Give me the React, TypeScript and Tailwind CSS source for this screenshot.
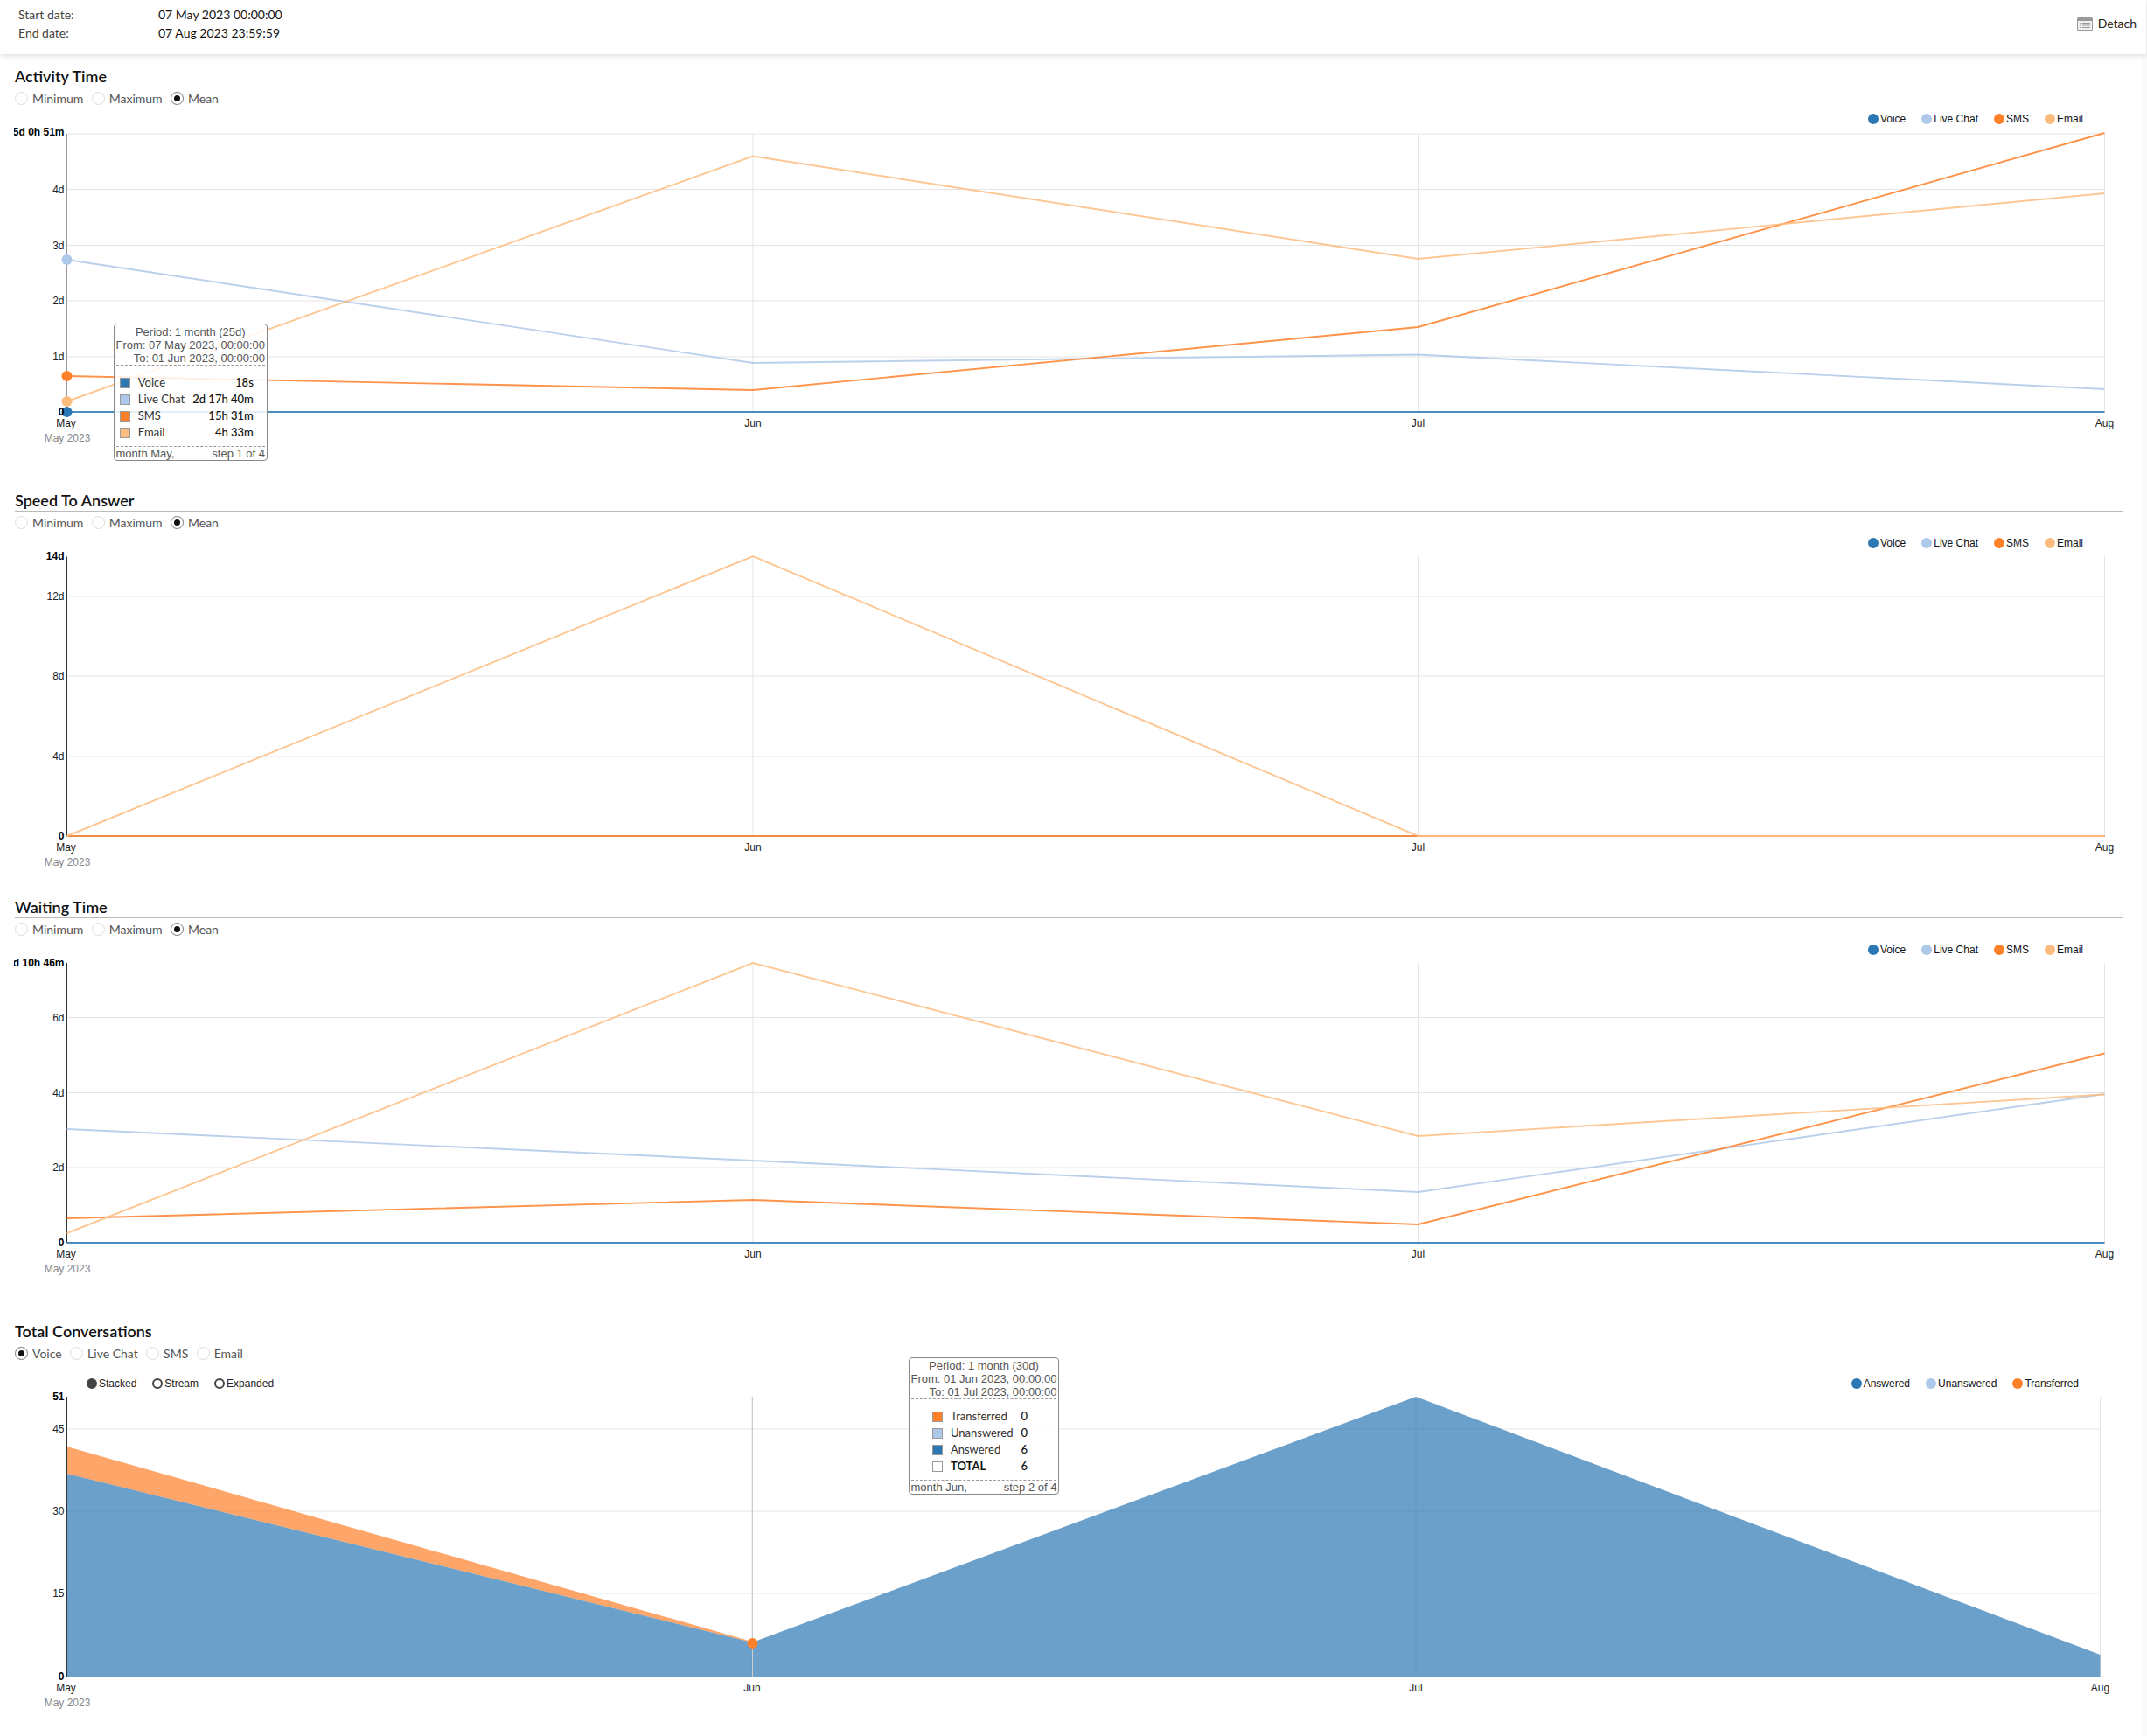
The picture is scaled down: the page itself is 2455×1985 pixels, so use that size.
import type { ReactNode } from "react";

const VOICE = "#2c78b4";
const LIVE = "#aec8e9";
const SMS = "#fe8029";
const EMAIL = "#fdbc7f";

interface Series {
  color: string;
  ys: number[];
}

interface Tick {
  label: string;
  y: number;
  dy?: number;
  bold?: boolean;
  grid?: boolean;
}

const lineLegend = [
  { label: "Voice", color: VOICE },
  { label: "Live Chat", color: LIVE },
  { label: "SMS", color: SMS },
  { label: "Email", color: EMAIL },
];

const xs = [76.5, 861, 1621.5, 2406.5];
const areaXs = [76.5, 860, 1619, 2401.5];

function Radio({ label, checked }: { label: string; checked?: boolean }) {
  return (
    <div className="flex items-center gap-[5px]">
      <span
        className={`flex h-[15px] w-[15px] items-center justify-center rounded-full border bg-white ${
          checked ? "border-[#777]" : "border-[#ddd]"
        }`}
      >
        {checked && <span className="h-[7px] w-[7px] rounded-full bg-[#111]" />}
      </span>
      <span className="-translate-y-[0.5px]">{label}</span>
    </div>
  );
}

function SectionTitle({ title, radios, checked }: { title: string; radios: string[]; checked: string }) {
  return (
    <>
      <div className="mr-[23px] h-[25px] border-b border-[#bbb] text-[18px] leading-[24px] font-semibold text-[#111]">
        {title}
      </div>
      <div className="flex h-[24px] items-center gap-[9.4px] text-[14px] text-[#555]">
        {radios.map((r) => (
          <Radio key={r} label={r} checked={r === checked} />
        ))}
      </div>
    </>
  );
}

function Legend({ items }: { items: { label: string; color: string }[] }) {
  return (
    <div className="flex items-center gap-[18px] font-['Liberation_Sans',sans-serif] text-[12px] text-[#111]">
      {items.map((item) => (
        <div key={item.label} className="flex items-center gap-[2px]">
          <span className="h-[12px] w-[12px] rounded-full" style={{ backgroundColor: item.color }} />
          {item.label}
        </div>
      ))}
    </div>
  );
}

function LegendRow() {
  return (
    <div className="relative z-10 -mb-[12px] flex h-[24px] items-center justify-end pr-[68px]">
      <Legend items={lineLegend} />
    </div>
  );
}

function Axes({ ticks, bottom, top, x, labelY, children }: { ticks: Tick[]; bottom: number; top: number; x: number[]; labelY: number; children?: ReactNode }) {
  const months = ["May", "Jun", "Jul", "Aug"];
  return (
    <g fontFamily="'Liberation Sans', sans-serif" fontSize="12">
      {ticks.filter((t) => t.grid !== false).map((t) => (
        <line key={t.label} x1={x[0]} x2={x[3]} y1={t.y} y2={t.y} stroke="#e5e5e5" />
      ))}
      {x.slice(1).map((v) => (
        <line key={v} x1={v} x2={v} y1={top} y2={bottom} stroke="#e5e5e5" />
      ))}
      {children}
      {ticks.map((t) => (
        <text key={t.label} x={73.5} y={t.y + 4 + (t.dy ?? 0)} textAnchor="end" fill={t.bold ? "#000" : "#222"} fontWeight={t.bold ? 700 : 400}>
          {t.label}
        </text>
      ))}
      {months.map((m, i) => (
        <text key={m} x={i === 0 ? 75.5 : x[i]} y={labelY} textAnchor="middle" fill="#222">
          {m}
        </text>
      ))}
      <text x={77} y={labelY + 17} textAnchor="middle" fill="#888">
        May 2023
      </text>
    </g>
  );
}

function LineChart({ top, height, ticks, series, plotTop, bottom, hover, children }: { top: number; height: number; ticks: Tick[]; series: Series[]; plotTop: number; bottom: number; hover?: boolean; children?: ReactNode }) {
  return (
    <svg className="-ml-[1px] block" width={2434} height={height} viewBox={`16 ${top} 2434 ${height}`}>
      <Axes ticks={ticks} bottom={bottom} top={plotTop} x={xs} labelY={bottom + 17}>
        <line x1={76.5} x2={76.5} y1={plotTop} y2={bottom} stroke={hover ? "#999" : "#333"} />
        {series.map((s) => (
          <polyline
            key={s.color}
            fill="none"
            stroke={s.color}
            strokeWidth={1.9}
            strokeOpacity={0.85}
            points={s.ys.map((y, i) => `${xs[i]},${y}`).join(" ")}
          />
        ))}
        {children}
      </Axes>
    </svg>
  );
}

function Tooltip({ className, head, rows, month, step }: { className: string; head: string[]; rows: { label: string; value: string; color: string; bold?: boolean }[]; month: string; step: string }) {
  return (
    <div className={`absolute z-20 w-fit rounded-[4px] border border-[#888] bg-white/85 px-[1.5px] font-['Liberation_Sans',sans-serif] text-[13px] leading-[15px] text-[#555] ${className}`}>
      <div className="border-b border-dashed border-[#999] pt-[1px] whitespace-nowrap">
        <div className="text-center">{head[0]}</div>
        <div className="text-right">{head[1]}</div>
        <div className="text-right">{head[2]}</div>
      </div>
      <table className="mx-auto mt-[10px] mb-[6px] border-collapse font-['Lato',sans-serif] text-[13px] text-[#333]">
        <tbody>
          {rows.map((r) => (
            <tr key={r.label} className="h-[19px]">
              <td className="pr-[9px]">
                <span className="block h-[12px] w-[12px] border border-[#999]" style={{ backgroundColor: r.color }} />
              </td>
              <td className={`pr-[9px] ${r.bold ? "font-bold text-[#111]" : ""}`}>{r.label}</td>
              <td className="pr-[9px] text-right font-medium text-[#111]">{r.value}</td>
            </tr>
          ))}
        </tbody>
      </table>
      <div className="flex justify-between border-t border-dashed border-[#999]">
        <span>{month}</span>
        <span>{step}</span>
      </div>
    </div>
  );
}

function DetachIcon() {
  return (
    <svg width="18" height="15" viewBox="0 0 18 15">
      <rect x="0" y="0" width="18" height="15" rx="1.5" fill="#999" />
      <rect x="1" y="4" width="16" height="10" fill="#f0f0f0" />
      <g stroke="#999" strokeWidth="1">
        <line x1="3" x2="4.5" y1="6.5" y2="6.5" />
        <line x1="6" x2="15" y1="6.5" y2="6.5" />
        <line x1="3" x2="4.5" y1="9" y2="9" />
        <line x1="6" x2="15" y1="9" y2="9" />
        <line x1="3" x2="4.5" y1="11.5" y2="11.5" />
        <line x1="6" x2="15" y1="11.5" y2="11.5" />
      </g>
    </svg>
  );
}

const timeRadios = ["Minimum", "Maximum", "Mean"];

export default function App() {
  return (
    <div className="flex h-[1985px] w-[2455px] overflow-hidden bg-white font-['Lato',sans-serif]">
      <div className="flex w-[2450px] flex-col">
        {/* Header */}
        <div className="relative z-10 -mr-[4px] flex h-[62px] justify-between bg-white shadow-[0_2px_6px_rgba(0,0,0,0.13)]">
          <div className="mt-[7px] ml-[11px] h-fit w-[1355px] text-[14px] leading-[20px]">
            <div className="flex h-[21px] border-b border-[#e8e8e8]">
              <span className="w-[170px] pl-[10px] text-[#444]">Start date:</span>
              <span className="text-[#111]">07 May 2023 00:00:00</span>
            </div>
            <div className="flex">
              <span className="w-[170px] pl-[10px] text-[#444]">End date:</span>
              <span className="text-[#111]">07 Aug 2023 23:59:59</span>
            </div>
          </div>
          <div className="mt-[17px] mr-[11px] flex h-fit items-center gap-[6px] text-[14px] leading-[20px] text-[#222]">
            <DetachIcon />
            Detach
          </div>
        </div>

        <div className="flex flex-col pt-[13px] pl-[17px]">
          {/* Activity Time */}
          <section className="relative h-[485px]">
            <SectionTitle title="Activity Time" radios={timeRadios} checked="Mean" />
            <LegendRow />
            <LineChart
              top={136}
              height={424}
              plotTop={153}
              bottom={471}
              hover
              ticks={[
                { label: "5d 0h 51m", y: 153, dy: -2.3, bold: true },
                { label: "4d", y: 216.5 },
                { label: "3d", y: 280.5 },
                { label: "2d", y: 344 },
                { label: "1d", y: 408 },
                { label: "0", y: 471, bold: true, grid: false },
              ]}
              series={[
                { color: VOICE, ys: [471, 471, 471, 471] },
                { color: LIVE, ys: [297, 415, 405.5, 445] },
                { color: SMS, ys: [430, 446, 374, 152] },
                { color: EMAIL, ys: [459, 178.5, 296, 221] },
              ]}
            >
              <circle cx={76.5} cy={297} r={6} fill={LIVE} />
              <circle cx={76.5} cy={459} r={6} fill={EMAIL} />
              <circle cx={76.5} cy={430} r={6} fill={SMS} />
              <circle cx={76.5} cy={471} r={6} fill={VOICE} />
            </LineChart>
            <Tooltip
              className="top-[295px] left-[113px]"
              head={["Period: 1 month (25d)", "From: 07 May 2023, 00:00:00", "To: 01 Jun 2023, 00:00:00"]}
              rows={[
                { label: "Voice", value: "18s", color: VOICE },
                { label: "Live Chat", value: "2d 17h 40m", color: LIVE },
                { label: "SMS", value: "15h 31m", color: SMS },
                { label: "Email", value: "4h 33m", color: EMAIL },
              ]}
              month="month May,"
              step="step 1 of 4"
            />
          </section>

          {/* Speed To Answer */}
          <section className="h-[465px]">
            <SectionTitle title="Speed To Answer" radios={timeRadios} checked="Mean" />
            <LegendRow />
            <LineChart
              top={621}
              height={404}
              plotTop={636.5}
              bottom={956}
              ticks={[
                { label: "14d", y: 636.5, dy: -1, bold: true, grid: false },
                { label: "12d", y: 682 },
                { label: "8d", y: 773 },
                { label: "4d", y: 865 },
                { label: "0", y: 956, bold: true, grid: false },
              ]}
              series={[
                { color: VOICE, ys: [956, 956, 956, 956] },
                { color: LIVE, ys: [956, 956, 956, 956] },
                { color: SMS, ys: [956, 956, 956, 956] },
                { color: EMAIL, ys: [956, 636, 956, 956] },
              ]}
            />
          </section>

          {/* Waiting Time */}
          <section className="h-[485px]">
            <SectionTitle title="Waiting Time" radios={timeRadios} checked="Mean" />
            <LegendRow />
            <LineChart
              top={1086}
              height={424}
              plotTop={1101}
              bottom={1421}
              ticks={[
                { label: "7d 10h 46m", y: 1101, bold: true, grid: false },
                { label: "6d", y: 1163.5 },
                { label: "4d", y: 1249.5 },
                { label: "2d", y: 1335 },
                { label: "0", y: 1421, bold: true, grid: false },
              ]}
              series={[
                { color: VOICE, ys: [1421, 1421, 1421, 1421] },
                { color: LIVE, ys: [1291, 1327, 1363, 1251] },
                { color: SMS, ys: [1393, 1372, 1400, 1204.5] },
                { color: EMAIL, ys: [1410, 1101, 1299, 1251.5] },
              ]}
            />
          </section>

          {/* Total Conversations */}
          <section className="relative h-[475px]">
            <SectionTitle title="Total Conversations" radios={["Voice", "Live Chat", "SMS", "Email"]} checked="Voice" />
            <div className="relative z-10 -mb-[23px] flex h-[46px] items-center justify-between pr-[73px] pl-[82px]">
              <div className="flex items-center gap-[18px] font-['Liberation_Sans',sans-serif] text-[12px] text-[#222]">
                {["Stacked", "Stream", "Expanded"].map((c, i) => (
                  <div key={c} className="flex items-center gap-[2px]">
                    <span className={`h-[12px] w-[12px] rounded-full border-2 border-[#444] ${i === 0 ? "bg-[#444]" : ""}`} />
                    {c}
                  </div>
                ))}
              </div>
              <Legend
                items={[
                  { label: "Answered", color: VOICE },
                  { label: "Unanswered", color: LIVE },
                  { label: "Transferred", color: SMS },
                ]}
              />
            </div>
            <svg className="-ml-[1px] block" width={2434} height={403} viewBox="16 1582 2434 403">
              <Axes
                ticks={[
                  { label: "51", y: 1597, bold: true, grid: false },
                  { label: "45", y: 1634 },
                  { label: "30", y: 1728 },
                  { label: "15", y: 1822 },
                  { label: "0", y: 1917, bold: true, grid: false },
                ]}
                bottom={1917}
                top={1597}
                x={areaXs}
                labelY={1934}
              >
                <polygon points="76.5,1654 860,1877 860,1878 76.5,1685" fill={SMS} fillOpacity={0.7} />
                <polygon points="76.5,1685 860,1878 1619,1597 2401.5,1892 2401.5,1917 76.5,1917" fill={VOICE} fillOpacity={0.7} />
                <line x1={76.5} x2={76.5} y1={1597} y2={1917} stroke="#333" />
                <line x1={860.5} x2={860.5} y1={1597} y2={1917} stroke="#ccc" />
                <circle cx={860.5} cy={1879} r={6} fill={SMS} />
              </Axes>
            </svg>
            <Tooltip
              className="top-[42px] left-[1022px]"
              head={["Period: 1 month (30d)", "From: 01 Jun 2023, 00:00:00", "To: 01 Jul 2023, 00:00:00"]}
              rows={[
                { label: "Transferred", value: "0", color: SMS },
                { label: "Unanswered", value: "0", color: LIVE },
                { label: "Answered", value: "6", color: VOICE },
                { label: "TOTAL", value: "6", color: "#ffffff", bold: true },
              ]}
              month="month Jun,"
              step="step 2 of 4"
            />
          </section>
        </div>
      </div>
      <div className="w-[5px] bg-[#fafafa]" />
    </div>
  );
}
